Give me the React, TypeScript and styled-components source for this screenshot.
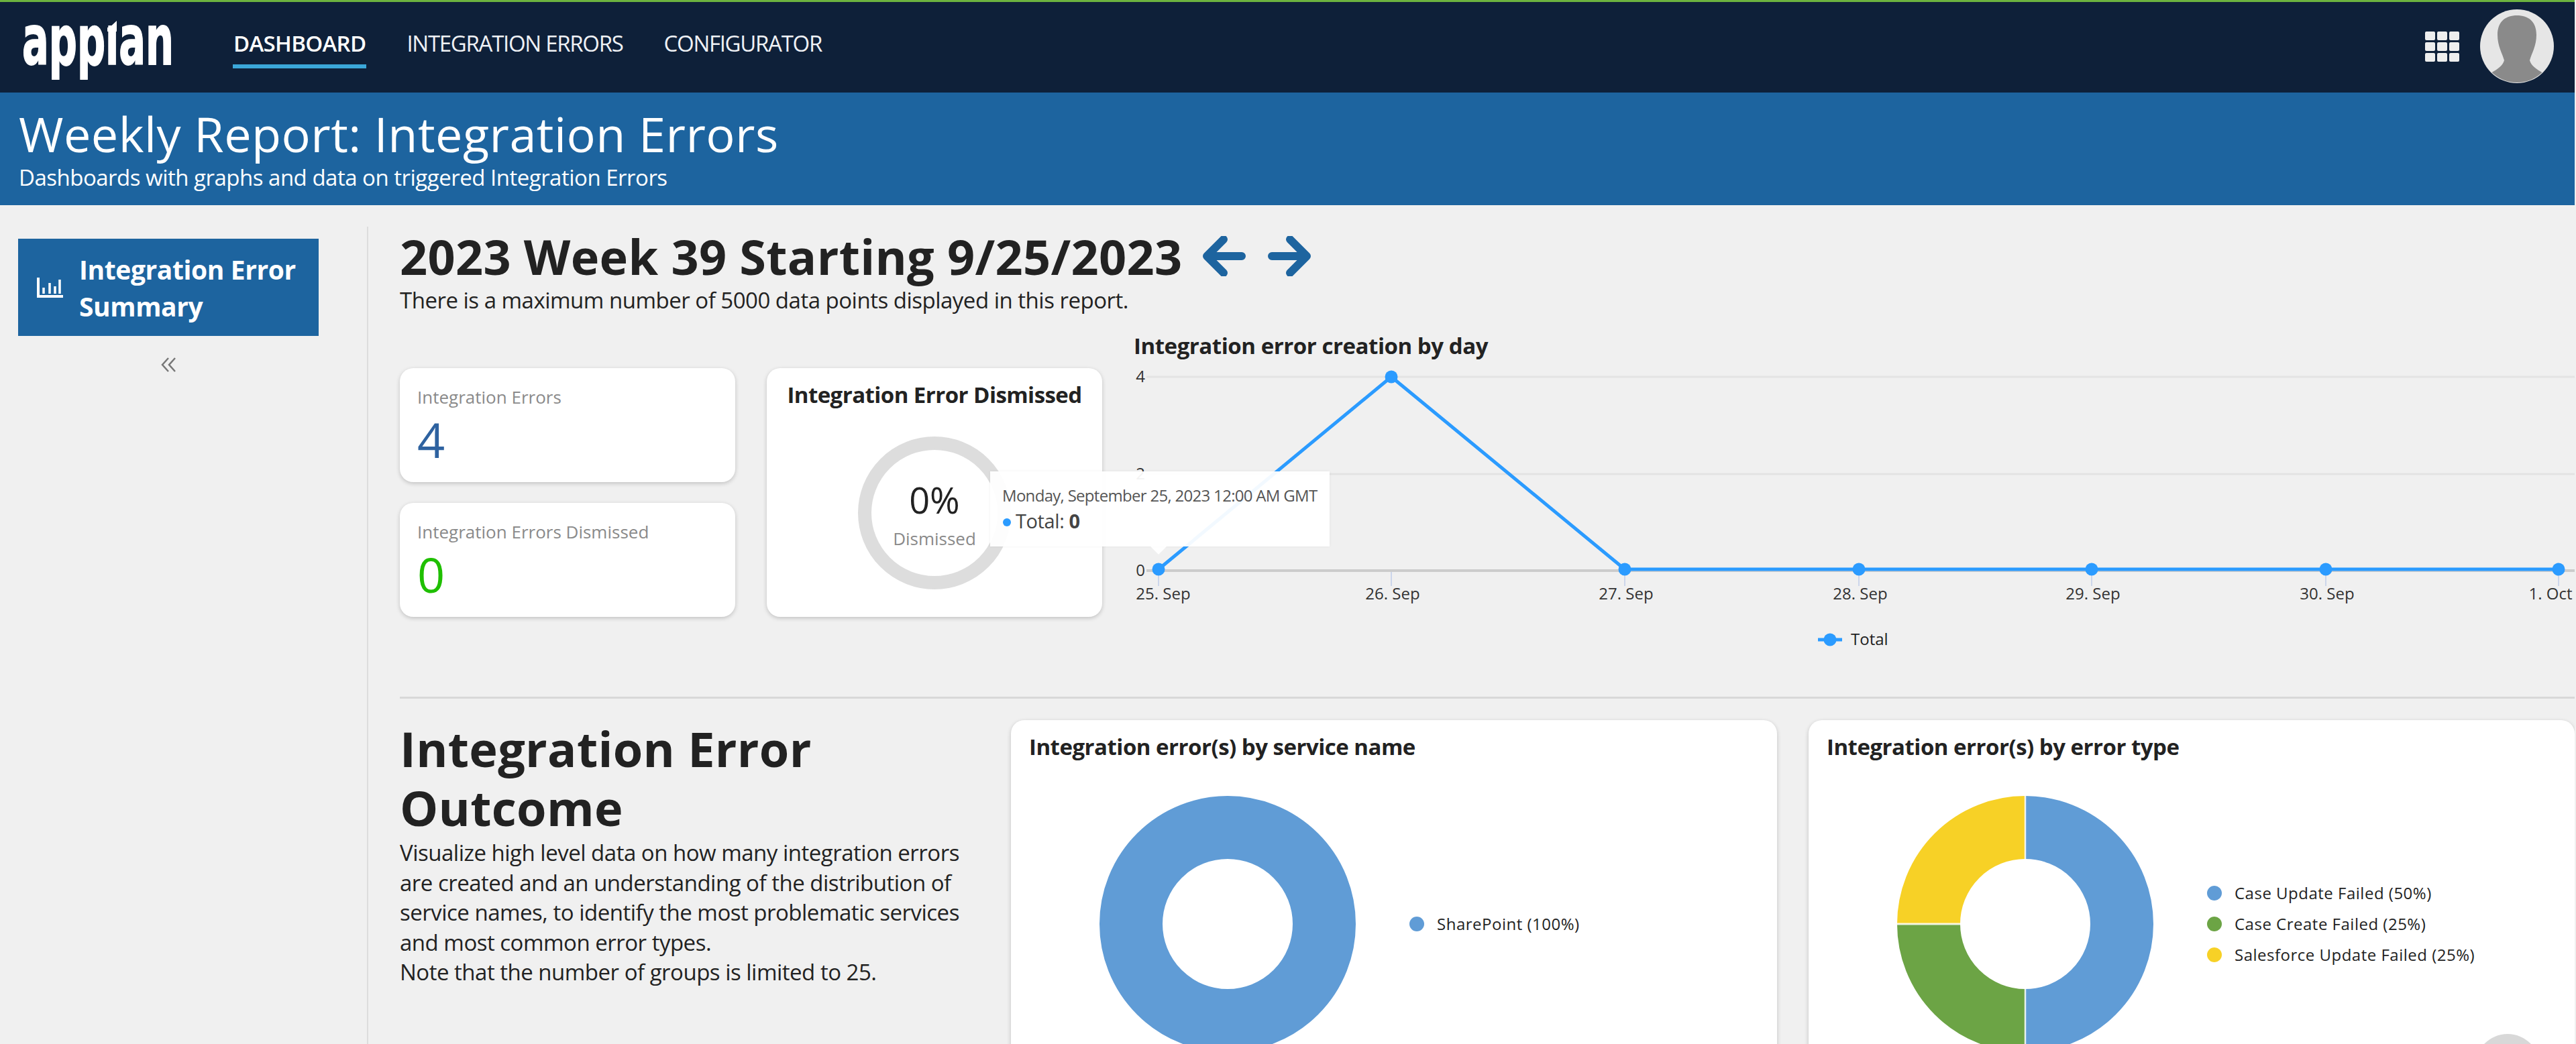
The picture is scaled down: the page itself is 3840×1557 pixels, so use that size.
import React from "react";
import styled, { createGlobalStyle } from "styled-components";

const BLUE = "#1d649f";
const LINE = "#2b9bff";
const NAVY = "#0e2039";

const GlobalStyle = createGlobalStyle`
  html, body {
    margin: 0;
    padding: 0;
    background: #f0f0f0;
  }
  * {
    box-sizing: border-box;
  }
  body {
    font-family: "Open Sans", "Liberation Sans", sans-serif;
    color: #222;
  }
`;

const points = [37, 384, 732, 1081, 1428, 1777, 2124];
const values = [0, 4, 0, 0, 0, 0, 0];
const dayLabels = [
  { x: 44, text: "25. Sep" },
  { x: 386, text: "26. Sep" },
  { x: 734, text: "27. Sep" },
  { x: 1083, text: "28. Sep" },
  { x: 1430, text: "29. Sep" },
  { x: 1779, text: "30. Sep" },
  { x: 2112, text: "1. Oct" },
];

const toY = (v: number) => 311 - (v / 4) * 287;

function LineChart() {
  const line = points.map((x, i) => `${x},${toY(values[i])}`).join(" ");
  return (
    <ChartSvg viewBox="0 0 2150 500">
      <line x1="19" x2="2150" y1="24" y2="24" stroke="#e3e3e3" strokeWidth="3" />
      <line x1="19" x2="2150" y1="169" y2="169" stroke="#e3e3e3" strokeWidth="3" />
      <line x1="19" x2="2150" y1="313" y2="313" stroke="#ccc" strokeWidth="4" />
      {points.map((x) => (
        <line key={x} x1={x} x2={x} y1="315" y2="336" stroke="#ccd6eb" strokeWidth="2" />
      ))}
      <AxisText x="10" y="32">4</AxisText>
      <AxisText x="10" y="177">2</AxisText>
      <AxisText x="10" y="321">0</AxisText>
      {dayLabels.map((l) => (
        <AxisText key={l.text} x={l.x} y="356">{l.text}</AxisText>
      ))}
      <polyline points={line} fill="none" stroke={LINE} strokeWidth="5" strokeLinejoin="round" />
      {points.map((x, i) => (
        <circle key={x} cx={x} cy={toY(values[i])} r="9.5" fill={LINE} />
      ))}
      <line x1="1020" x2="1056" y1="416" y2="416" stroke={LINE} strokeWidth="5" />
      <circle cx="1038" cy="416" r="9.5" fill={LINE} />
      <LegendText x="1069" y="424">Total</LegendText>
    </ChartSvg>
  );
}

type Slice = { color: string; share: number };

// arc of the ring between two shares, clockwise from 12 o'clock
const arcPath = (from: number, to: number) => {
  const a0 = (from / 100) * Math.PI * 2 - Math.PI / 2;
  const a1 = (to / 100) * Math.PI * 2 - Math.PI / 2;
  const large = to - from > 50 ? 1 : 0;
  return `M${191 + 144 * Math.cos(a0)} ${191 + 144 * Math.sin(a0)}A144 144 0 ${large} 1 ${
    191 + 144 * Math.cos(a1)
  } ${191 + 144 * Math.sin(a1)}`;
};

function Donut({ slices }: { slices: Slice[] }) {
  if (slices.length === 1) {
    return (
      <DonutSvg viewBox="0 0 382 382">
        <circle cx="191" cy="191" r="144" fill="none" stroke={slices[0].color} strokeWidth="94" />
      </DonutSvg>
    );
  }
  let start = 0;
  return (
    <DonutSvg viewBox="0 0 382 382">
      {slices.map((s) => {
        const d = arcPath(start, start + s.share);
        start += s.share;
        return <path key={s.color} d={d} fill="none" stroke={s.color} strokeWidth="94" />;
      })}
      <line x1="191" x2="191" y1="0" y2="97" stroke="#fff" strokeOpacity="0.85" strokeWidth="2.5" />
      <line x1="191" x2="191" y1="285" y2="382" stroke="#fff" strokeOpacity="0.85" strokeWidth="2.5" />
      <line x1="0" x2="97" y1="191" y2="191" stroke="#fff" strokeOpacity="0.85" strokeWidth="3" />
    </DonutSvg>
  );
}

const serviceLegend = [{ color: "#609cd6", share: 100, label: "SharePoint (100%)" }];
const typeLegend = [
  { color: "#609cd6", share: 50, label: "Case Update Failed (50%)" },
  { color: "#6ca445", share: 25, label: "Case Create Failed (25%)" },
  { color: "#f7d126", share: 25, label: "Salesforce Update Failed (25%)" },
];

function PieCard({ title, data }: { title: string; data: typeof typeLegend }) {
  return (
    <Card>
      <ChartTitle>{title}</ChartTitle>
      <PieBody>
        <Donut slices={data} />
        <Legend>
          {data.map((d) => (
            <LegendItem key={d.label}>
              <Dot $color={d.color} />
              {d.label}
            </LegendItem>
          ))}
        </Legend>
      </PieBody>
    </Card>
  );
}

export default function App() {
  return (
    <Page>
      <GlobalStyle />
      <TopBar>
        <Logo viewBox="0 0 223 90" aria-label="appian">
          <g transform="scale(0.572 1)">
            <LogoText x="0" y="66">appian</LogoText>
          </g>
          {/* the logo's i has a slanted top instead of a dot */}
          <rect x="121" y="-15" width="27" height="23" fill={NAVY} />
          <polygon points="127,14 141,1 141,12 127,12" fill="#fff" />
          <rect x="127" y="11" width="14" height="6" fill="#fff" />
        </Logo>
        <NavList>
          <NavLink $active>DASHBOARD</NavLink>
          <NavLink>INTEGRATION ERRORS</NavLink>
          <NavLink>CONFIGURATOR</NavLink>
        </NavList>
        <TopRight>
          <AppGrid>
            {Array.from({ length: 9 }).map((_, i) => (
              <AppTile key={i} />
            ))}
          </AppGrid>
          <Avatar viewBox="0 0 110 110">
            <defs>
              <clipPath id="avatar-clip">
                <circle cx="55" cy="55" r="54" />
              </clipPath>
            </defs>
            <circle cx="55" cy="55" r="55" fill="#e6e6e6" />
            <path
              clipPath="url(#avatar-clip)"
              fill="#8a8a8a"
              d="M55 9C72 9 84 18 84 38C84 55 77 65 74 76C76 84 84 89 94 95L94 110L16 110L16 95C26 89 34 84 36 76C33 65 26 55 26 38C26 18 38 9 55 9Z"
            />
          </Avatar>
        </TopRight>
      </TopBar>

      <Banner>
        <BannerTitle>Weekly Report: Integration Errors</BannerTitle>
        <BannerSub>Dashboards with graphs and data on triggered Integration Errors</BannerSub>
      </Banner>

      <Body>
        <Sidebar>
          <SideButton>
            <svg width="39" height="30" viewBox="0 0 39 30" fill="none" stroke="#fff">
              <path d="M2 0V28H39" strokeWidth="4" />
              <path d="M10 15V24M19 8V24M27 13V24M34 3V24" strokeWidth="3.5" />
            </svg>
            <SideLabel>Integration Error Summary</SideLabel>
          </SideButton>
          <Collapse>
            <svg width="22" height="22" viewBox="0 0 22 22" fill="none" stroke="#777" strokeWidth="2.5">
              <path d="M11 1L2 11L11 21M21 1L12 11L21 21" />
            </svg>
          </Collapse>
        </Sidebar>

        <Content>
          <WeekRow>
            <WeekTitle>2023 Week 39 Starting 9/25/2023</WeekTitle>
            <ArrowIcon viewBox="0 0 64 60">
              <path d="M31 5L6 30L31 55M6 30H58" />
            </ArrowIcon>
            <ArrowIcon viewBox="0 0 64 60">
              <path d="M33 5L58 30L33 55M58 30H6" />
            </ArrowIcon>
          </WeekRow>
          <WeekNote>There is a maximum number of 5000 data points displayed in this report.</WeekNote>

          <SummaryRow>
            <StatStack>
              <StatCard>
                <StatLabel>Integration Errors</StatLabel>
                <StatValue $color="#2e62a0">4</StatValue>
              </StatCard>
              <StatCard>
                <StatLabel>Integration Errors Dismissed</StatLabel>
                <StatValue $color="#1fbf00">0</StatValue>
              </StatCard>
            </StatStack>
            <DismissCard>
              <DismissTitle>Integration Error Dismissed</DismissTitle>
              <Ring>
                <RingValue>0%</RingValue>
                <RingLabel>Dismissed</RingLabel>
              </Ring>
            </DismissCard>
            <ChartColumn>
              <ChartHeading>Integration error creation by day</ChartHeading>
              <LineChart />
            </ChartColumn>
            <Tooltip>
              <TooltipDate>Monday, September 25, 2023 12:00 AM GMT</TooltipDate>
              <TooltipValue>
                <TooltipDot />
                Total: <b>0</b>
              </TooltipValue>
            </Tooltip>
          </SummaryRow>

          <OutcomeRow>
            <OutcomeIntro>
              <OutcomeTitle>Integration Error Outcome</OutcomeTitle>
              <OutcomeText>
                Visualize high level data on how many integration errors are created and an
                understanding of the distribution of service names, to identify the most problematic
                services and most common error types.
                <br />
                Note that the number of groups is limited to 25.
              </OutcomeText>
            </OutcomeIntro>
            <PieCard title="Integration error(s) by service name" data={serviceLegend} />
            <PieCard title="Integration error(s) by error type" data={typeLegend} />
          </OutcomeRow>
        </Content>
      </Body>
      <ScrollButton />
    </Page>
  );
}

const Page = styled.div`
  position: relative;
  width: 3838px;
  height: 1557px;
  overflow: hidden;
  background: #f0f0f0;
`;

const TopBar = styled.header`
  display: flex;
  align-items: flex-start;
  height: 138px;
  padding-left: 33px;
  background: ${NAVY};
  border-top: 3px solid #6cb33f;
`;

const Logo = styled.svg`
  width: 223px;
  height: 90px;
  margin-top: 27px;
  flex: none;
  overflow: visible;
`;

const LogoText = styled.text`
  font-family: "DejaVu Sans", sans-serif;
  font-weight: 700;
  font-size: 103px;
  fill: #fff;
  stroke: #fff;
  stroke-width: 2px;
`;

const NavList = styled.nav`
  display: flex;
  gap: 59px;
  margin-left: 91px;
  margin-top: 40px;
`;

const NavLink = styled.a<{ $active?: boolean }>`
  padding: 0 1px 9px;
  font-size: 33px;
  line-height: 44px;
  font-weight: ${(p) => (p.$active ? 600 : 400)};
  letter-spacing: ${(p) => (p.$active ? "-0.7px" : "-1.3px")};
  color: ${(p) => (p.$active ? "#fff" : "#eef1f5")};
  border-bottom: 6px solid ${(p) => (p.$active ? "#3ba7d9" : "transparent")};
`;

const TopRight = styled.div`
  display: flex;
  align-items: center;
  gap: 31px;
  margin-left: auto;
  margin-top: 11px;
  padding-right: 31px;
`;

const AppGrid = styled.div`
  display: grid;
  grid-template-columns: repeat(3, 15px);
  grid-auto-rows: 13px;
  gap: 3px;
`;

const AppTile = styled.span`
  background: #eee;
  border-radius: 2px;
`;

const Avatar = styled.svg`
  width: 110px;
  height: 110px;
`;

const Banner = styled.section`
  height: 168px;
  padding: 18px 0 0 28px;
  background: ${BLUE};
  color: #fff;
`;

const BannerTitle = styled.h1`
  margin: 0;
  font-size: 72px;
  line-height: 87px;
  font-weight: 400;
  letter-spacing: 0.45px;
`;

const BannerSub = styled.div`
  font-size: 33px;
  line-height: 44px;
  letter-spacing: -0.5px;
`;

const Body = styled.div`
  display: flex;
  padding-top: 32px;
`;

const Sidebar = styled.aside`
  flex: none;
  width: 549px;
  height: 1300px;
  padding: 18px 0 0 27px;
  border-right: 2px solid #ddd;
`;

const SideButton = styled.div`
  display: flex;
  align-items: center;
  gap: 24px;
  width: 448px;
  height: 145px;
  padding-left: 28px;
  background: ${BLUE};
  color: #fff;
`;

const SideLabel = styled.div`
  width: 340px;
  font-size: 39px;
  line-height: 55px;
  font-weight: 700;
  letter-spacing: -0.4px;
`;

const Collapse = styled.div`
  display: flex;
  justify-content: center;
  width: 448px;
  margin-top: 32px;
`;

const Content = styled.main`
  flex: 1;
  min-width: 0;
  padding-left: 47px;
`;

const WeekRow = styled.div`
  display: flex;
  align-items: center;
`;

const WeekTitle = styled.h2`
  margin: 0 31px 0 0;
  font-size: 72px;
  line-height: 88px;
  font-weight: 700;
  letter-spacing: 0.3px;
  color: #222;
`;

const ArrowIcon = styled.svg`
  width: 64px;
  height: 60px;
  margin-right: 33px;
  fill: none;
  stroke: ${BLUE};
  stroke-width: 12;
  stroke-linecap: round;
  stroke-linejoin: round;
`;

const WeekNote = styled.p`
  margin: 0;
  font-size: 33px;
  line-height: 44px;
  letter-spacing: -0.5px;
`;

const SummaryRow = styled.div`
  position: relative;
  display: flex;
  align-items: flex-start;
  gap: 47px;
  margin-top: 24px;
`;

const StatStack = styled.div`
  display: flex;
  flex-direction: column;
  gap: 31px;
  flex: none;
  width: 500px;
  margin-top: 55px;
`;

const CardBase = styled.div`
  background: #fff;
  border-radius: 20px;
  box-shadow: 0 2px 6px rgba(0, 0, 0, 0.2);
`;

const StatCard = styled(CardBase)`
  height: 170px;
  padding: 25px 0 0 26px;
`;

const StatLabel = styled.div`
  font-size: 26px;
  line-height: 36px;
  color: #8a8a8a;
`;

const StatValue = styled.div<{ $color: string }>`
  margin-top: 5px;
  font-size: 72px;
  line-height: 80px;
  font-weight: 400;
  color: ${(p) => p.$color};
`;

const DismissCard = styled(CardBase)`
  display: flex;
  flex-direction: column;
  align-items: center;
  flex: none;
  width: 500px;
  height: 371px;
  margin-top: 55px;
  padding-top: 18px;
`;

const DismissTitle = styled.div`
  font-size: 33px;
  line-height: 44px;
  font-weight: 700;
  letter-spacing: -0.55px;
`;

const Ring = styled.div`
  display: flex;
  flex-direction: column;
  align-items: center;
  width: 228px;
  height: 228px;
  margin-top: 40px;
  padding-top: 40px;
  border: 20px solid #ddd;
  border-radius: 50%;
`;

const RingValue = styled.div`
  font-size: 54px;
  line-height: 68px;
`;

const RingLabel = styled.div`
  margin-top: 6px;
  font-size: 26px;
  line-height: 36px;
  color: #8a8a8a;
`;

const ChartColumn = styled.div`
  flex: 1;
  min-width: 0;
`;

const ChartHeading = styled.div`
  font-size: 33px;
  line-height: 44px;
  font-weight: 700;
  letter-spacing: -0.45px;
`;

const ChartSvg = styled.svg`
  display: block;
  width: 2150px;
  height: 500px;
  overflow: visible;
`;

const AxisText = styled.text`
  font-size: 24px;
  fill: #333;
  text-anchor: middle;
`;

const LegendText = styled.text`
  font-size: 24px;
  fill: #222;
`;

const Tooltip = styled.div`
  position: absolute;
  left: 880px;
  top: 209px;
  width: 506px;
  height: 112px;
  padding: 20px 0 0 18px;
  background: rgba(255, 255, 255, 0.94);
  box-shadow: 0 0 4px rgba(0, 0, 0, 0.06);

  &::after {
    content: "";
    position: absolute;
    left: 239px;
    top: 100%;
    border-left: 12px solid transparent;
    border-right: 12px solid transparent;
    border-top: 12px solid rgba(255, 255, 255, 0.94);
  }
`;

const TooltipDate = styled.div`
  font-size: 24px;
  line-height: 32px;
  letter-spacing: -0.7px;
  color: #555;
  white-space: nowrap;
`;

const TooltipValue = styled.div`
  margin-top: 3px;
  font-size: 29px;
  line-height: 38px;
  letter-spacing: -0.4px;
  color: #444;

  b {
    font-weight: 700;
  }
`;

const TooltipDot = styled.span`
  display: inline-block;
  width: 12px;
  height: 12px;
  margin: 0 7px 3px 1px;
  border-radius: 50%;
  background: ${LINE};
`;

const OutcomeRow = styled.div`
  display: flex;
  gap: 47px;
  margin-top: 1px;
  padding-top: 32px;
  border-top: 3px solid #d8d8d8;
`;

const OutcomeIntro = styled.div`
  flex: none;
  width: 864px;
`;

const OutcomeTitle = styled.h2`
  margin: -2px 0 0;
  width: 700px;
  font-size: 72px;
  line-height: 88px;
  font-weight: 700;
  letter-spacing: 0.3px;
`;

const OutcomeText = styled.p`
  margin: 2px 0 0;
  width: 850px;
  font-size: 33px;
  line-height: 44.5px;
  letter-spacing: -0.5px;
`;

const Card = styled(CardBase)`
  flex: none;
  width: 1142px;
  height: 700px;
  padding: 18px 0 0 27px;
`;

const ChartTitle = styled.div`
  font-size: 33px;
  line-height: 44px;
  font-weight: 700;
  letter-spacing: -0.5px;
`;

const PieBody = styled.div`
  display: flex;
  align-items: flex-start;
  margin-top: 51px;
  padding-left: 105px;
`;

const DonutSvg = styled.svg`
  flex: none;
  width: 382px;
  height: 382px;
`;

const Legend = styled.ul`
  display: flex;
  flex-direction: column;
  gap: 14px;
  align-self: flex-start;
  height: 382px;
  justify-content: center;
  margin: 0 0 0 80px;
  padding: 0;
  list-style: none;
`;

const LegendItem = styled.li`
  display: flex;
  align-items: center;
  gap: 19px;
  font-size: 24px;
  line-height: 32px;
  letter-spacing: 0.5px;
  color: #222;
`;

const Dot = styled.span<{ $color: string }>`
  width: 22px;
  height: 22px;
  border-radius: 50%;
  background: ${(p) => p.$color};
`;

const ScrollButton = styled.div`
  position: absolute;
  left: 3690px;
  top: 1542px;
  width: 96px;
  height: 96px;
  border-radius: 50%;
  background: #d8d8d8;
`;
